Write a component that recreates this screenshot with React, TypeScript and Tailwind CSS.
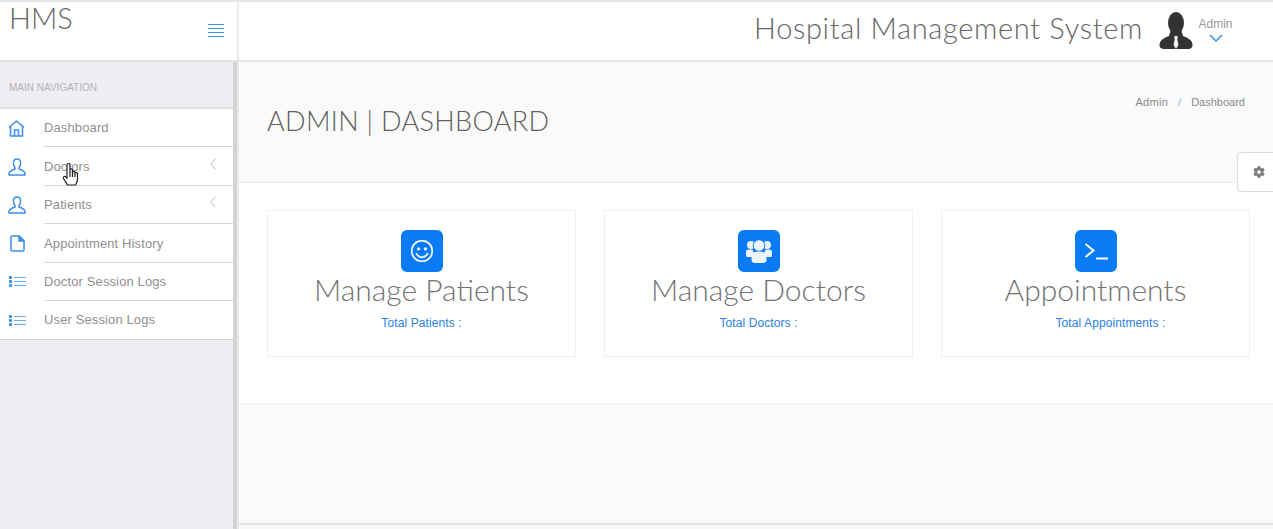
import React from "react";
import { SlArrowLeft, SlEmotsmile } from "react-icons/sl";
import { FaCog } from "react-icons/fa";

const nav = "font-['Liberation_Sans',Arial,sans-serif]";
const head = "font-['Lato','Open_Sans',sans-serif]";

function HomeIcon() {
  return (
    <svg width="17" height="17" viewBox="0 0 17 17" fill="none" stroke="currentColor" strokeWidth="1.5" strokeLinejoin="round">
      <path d="M1 7.5L8.5 1L16 7.5" />
      <path d="M2.5 6.5V16H14.5V6.5" />
      <path d="M6.5 16V10H10.5V16" />
    </svg>
  );
}

function UserIcon() {
  return (
    <svg width="18" height="18" viewBox="0 0 18 18" fill="none" stroke="currentColor" strokeWidth="1.5" strokeLinejoin="round">
      <path d="M9 1C6.6 1 5.4 2.8 5.4 5C5.4 7 6.2 8.6 7 9.6V11C5.5 11.8 1 13 1 15.5V17H17V15.5C17 13 12.5 11.8 11 11V9.6C11.8 8.6 12.6 7 12.6 5C12.6 2.8 11.4 1 9 1Z" />
    </svg>
  );
}

function DocIcon() {
  return (
    <svg width="15" height="17" viewBox="0 0 15 17" fill="none" stroke="currentColor" strokeWidth="1.5" strokeLinejoin="round">
      <path d="M1 2C1 1.3 1.4 1 2 1H9L14 6V15C14 15.7 13.6 16 13 16H2C1.4 16 1 15.7 1 15Z" />
      <path d="M9 1V6H14Z" fill="currentColor" />
    </svg>
  );
}

function ListIcon() {
  return (
    <svg width="17" height="11" viewBox="0 0 17 11" fill="currentColor">
      <rect x="0" y="0" width="3" height="3" rx="0.8" />
      <rect x="0" y="4" width="3" height="3" rx="0.8" />
      <rect x="0" y="8" width="3" height="3" rx="0.8" />
      <path d="M5 1.5H17M5 5.5H17M5 9.5H17" stroke="currentColor" strokeOpacity="0.75" strokeWidth="1.2" />
    </svg>
  );
}

function Row({ icon, label, arrow, last }: { icon: React.ReactNode; label: string; arrow?: boolean; last?: boolean }) {
  return (
    <div className="flex h-[38.4px] items-center">
      <div className="flex w-[44px] shrink-0 justify-start pl-[8px] text-[#3b8fe8]">{icon}</div>
      <div className={`flex h-full flex-1 items-center justify-between pr-[19px] border-b ${last ? "border-transparent" : "border-[#d8d8da]"}`}>
        <span className={`${nav} pt-[1px] text-[13px] tracking-[0.12px] text-[#8f8f8f]`}>{label}</span>
        {arrow && <SlArrowLeft className="mb-[4px] text-[10px] text-[#b9b9b9]" />}
      </div>
    </div>
  );
}

function Card({ icon, title, sub, subClass }: { icon: React.ReactNode; title: string; sub: string; subClass?: string }) {
  return (
    <div className="flex h-[147px] flex-1 flex-col items-center border border-[#f0f0f1] bg-white pt-[19px]">
      <div className="flex h-[42px] w-[42px] items-center justify-center rounded-[6px] bg-[#0a7bf5] text-white">{icon}</div>
      <div className={`${head} -mt-[1px] text-[30px] font-light leading-[36px] text-[#737373]`}>{title}</div>
      <div className={`${nav} mt-[8px] text-[12px] leading-[16px] tracking-[0.1px] text-[#2a7fe0] ${subClass ?? ""}`}>{sub}</div>
    </div>
  );
}

function Tie() {
  return (
    <svg width="34" height="37" viewBox="0 0 34 37" className="shrink-0">
      <ellipse cx="17" cy="11" rx="8" ry="11" fill="#333" />
      <path d="M11.5 19 L22.5 19 L24 24 C29 26 33.5 28 33.5 33 C33.5 36.5 31 37 29 37 L5 37 C3 37 0.5 36.5 0.5 33 C0.5 28 5 26 10 24 Z" fill="#333" />
      <path d="M15 25 L17 23.5 L19 25 L18.2 27 L19.5 33 L17 37 L14.5 33 L15.8 27 Z" fill="#f2f2f2" />
    </svg>
  );
}

function MenuLines() {
  return (
    <svg width="16" height="14" viewBox="0 0 16 14" className="text-[#3a8fe0]" stroke="currentColor" strokeWidth="1.1">
      <path d="M0 1.5H16M0 5.5H16M0 9.5H16M0 13.5H16" />
    </svg>
  );
}

function Users() {
  return (
    <svg width="28" height="26" viewBox="0 0 28 26" fill="#eef5ff">
      <circle cx="6" cy="7" r="4" />
      <circle cx="22" cy="7" r="4" />
      <path d="M1 13.5C1 12 2.5 11.5 6 11.5L8 12V19H3C2 19 1 18.5 1 17.5Z" />
      <path d="M27 13.5C27 12 25.5 11.5 22 11.5L20 12V19H25C26 19 27 18.5 27 17.5Z" />
      <circle cx="14" cy="7.5" r="5.8" stroke="#0a7bf5" strokeWidth="1" />
      <path d="M6.5 17C6.5 14.5 9 13.5 14 13.5C19 13.5 21.5 14.5 21.5 17V22C21.5 24 20 25 18 25H10C8 25 6.5 24 6.5 22Z" />
    </svg>
  );
}

function Prompt() {
  return (
    <svg width="24" height="18" viewBox="0 0 24 18" fill="none" stroke="white" strokeWidth="2">
      <path d="M1.5 2L9.5 8.5L1.5 15" />
      <path d="M12 16.5H24" />
    </svg>
  );
}

function Hand() {
  return (
    <svg width="18" height="24" viewBox="0 0 18 24" className="absolute left-[62px] top-[162px]" fill="white" stroke="#222" strokeWidth="1.2" strokeLinejoin="round">
      <path d="M5 13V3C5 1 8 1 8 3V10V8C8 6.5 10.5 6.5 10.5 8V10.5C10.5 9 13 9 13 10.5V11.5C13 10.2 15.5 10.2 15.5 11.5V17C15.5 20 14 22 13.5 23H5.5C4.5 21 3 19.5 1.5 16.5C0.8 15 2.5 13.5 3.8 15L5 16.5Z" />
      <path d="M8 10V15M10.5 10.5V15M13 11.5V15" fill="none" />
    </svg>
  );
}

export default function App() {
  return (
    <div className="relative flex h-[529px] w-[1273px] flex-col overflow-hidden bg-white">
      <div className="flex h-[62px] shrink-0 border-y-2 border-t-[#e6e6e8] border-b-[#e3e3e5] bg-white">
        <div className="flex w-[239px] shrink-0 justify-between border-r-2 border-[#e9e9eb] pl-[9px] pr-[13px]">
          <div className={`${head} text-[29px] font-light leading-[32px] text-[#666666]`}>HMS</div>
          <div className="pt-[21px]"><MenuLines /></div>
        </div>
        <div className="flex flex-1 items-start justify-end pr-[40px]">
          <div className={`${head} mt-[8px] text-[29px] font-light leading-[36px] tracking-[0.65px] text-[#666666]`}>Hospital Management System</div>
          <div className="ml-[16px] mt-[10px]"><Tie /></div>
          <div className="ml-[5px] flex w-[35px] flex-col items-center pt-[15px]">
            <span className={`${nav} text-[12px] leading-[14px] text-[#999999]`}>Admin</span>
            <svg width="14" height="8" viewBox="0 0 14 8" fill="none" stroke="#3a8fe0" strokeWidth="1.5" className="mt-[3px]">
              <path d="M1 1L7 7L13 1" />
            </svg>
          </div>
        </div>
      </div>

      <div className="flex flex-1">
        <aside className="relative w-[239px] shrink-0 border-r-2 border-[#e9e9eb] bg-[#f0eef3]">
          <div className="flex h-[47px] items-center border-b-2 border-[#dfdfe2] pl-[9px] pt-[5px]">
            <span className={`${nav} text-[10px] text-[#b4b4b6]`}>MAIN NAVIGATION</span>
          </div>
          <div className="border-b border-[#cfcfd2] bg-white">
            <Row icon={<HomeIcon />} label="Dashboard" />
            <Row icon={<UserIcon />} label="Doctors" arrow />
            <Row icon={<UserIcon />} label="Patients" arrow />
            <Row icon={<span className="pl-[2px]"><DocIcon /></span>} label="Appointment History" />
            <Row icon={<span className="pl-[1px]"><ListIcon /></span>} label="Doctor Session Logs" />
            <Row icon={<span className="pl-[1px]"><ListIcon /></span>} label="User Session Logs" last />
          </div>
          <div className="absolute bottom-0 right-0 top-0 w-[4px] bg-[#d3d3d6]" />
        </aside>

        <main className="flex flex-1 flex-col">
          <div className="flex h-[121px] shrink-0 items-start justify-between border-b border-[#ececee] bg-[#fafafa] pl-[28px] pr-[28px]">
            <h1 className={`${head} mt-[41px] text-[27px] font-light leading-[36px] tracking-[0.35px] text-[#5f5f5f]`}>ADMIN | DASHBOARD</h1>
            <div className={`${nav} mt-[33px] flex text-[11px] leading-[14px]`}>
              <span className="text-[#8a8a8a] tracking-[0.3px]">Admin</span>
              <span className="mx-[10px] text-[#8fb5e0]">/</span>
              <span className="text-[#8a8a8a]">Dashboard</span>
            </div>
          </div>
          <div className="flex h-[221px] shrink-0 border-b border-[#f3f3f4] bg-white pl-[28px] pr-[23px] pt-[27px]">
            <div className="flex flex-1 items-start gap-[28px]">
              <Card icon={<SlEmotsmile className="stroke-[20px] text-[22px]" />} title="Manage Patients" sub="Total Patients :" />
              <Card icon={<Users />} title="Manage Doctors" sub="Total Doctors :" />
              <Card icon={<Prompt />} title="Appointments" sub="Total Appointments :" subClass="ml-[30px]" />
            </div>
          </div>
          <div className="flex-1 bg-[#fafafb]" />
          <div className="h-[6px] shrink-0 border-t-2 border-[#e3e3e5] bg-[#f9f9fa]" />
        </main>
      </div>

      <div className="absolute right-0 top-[152px] flex h-[40px] w-[36px] items-center justify-center rounded-l-[4px] border border-r-0 border-[#dcdcde] bg-white pl-[6px]">
        <FaCog className="text-[12px] text-[#7d7d7d]" />
      </div>
      <Hand />
    </div>
  );
}
